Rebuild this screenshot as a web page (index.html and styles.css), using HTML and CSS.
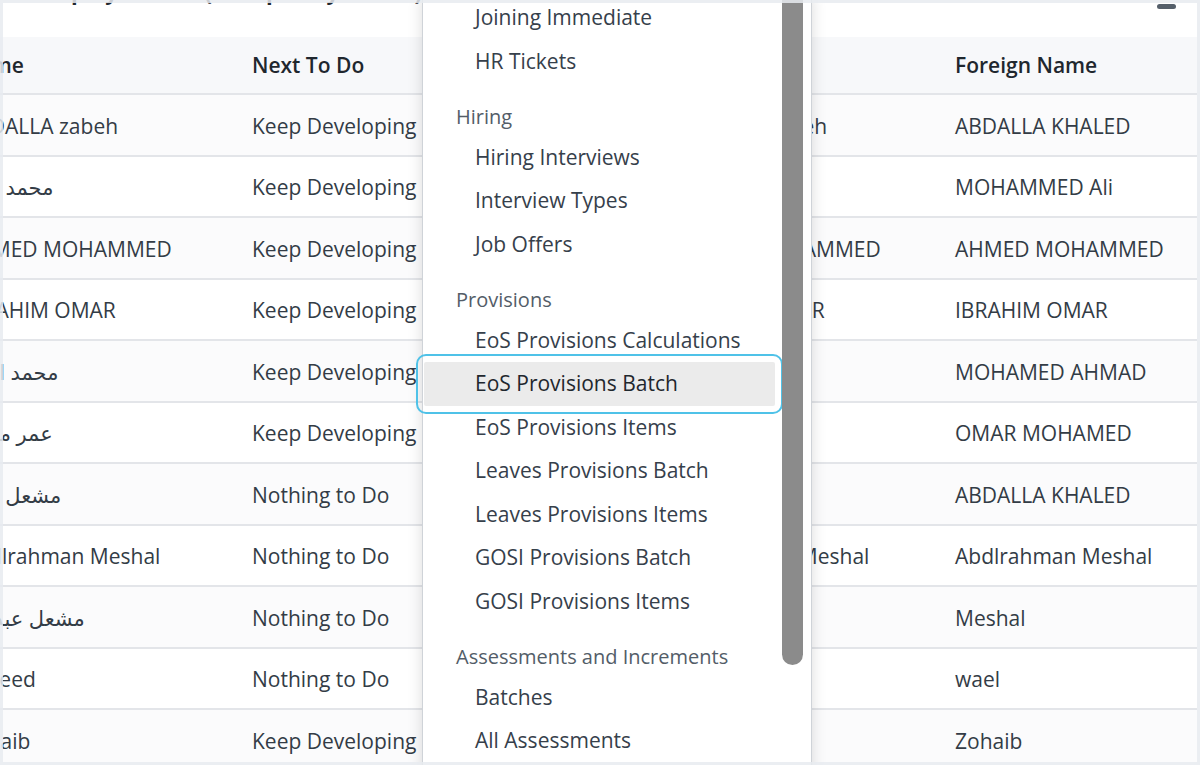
FILE: index.html
```html
<!DOCTYPE html>
<html>
<head>
	<title>Employee Files</title>
	<link rel="stylesheet" href="styles.css">
</head>
<body>
<div class="page">
  <div class="card">
    <div class="head">
      <span class="title">Active Employee Files (Grouped by Status)</span>
      <span class="collapse"></span>
    </div>
    <div class="row th">
      <div>Name</div>
      <div>Next To Do</div>
      <div>Full Name</div>
      <div>Foreign Name</div>
    </div>
    <div class="row"><div>ABDALLA zabeh</div><div>Keep Developing</div><div>ABDALLA zabeh</div><div>ABDALLA KHALED</div></div>
    <div class="row"><div>محمد علي</div><div>Keep Developing</div><div>محمد علي</div><div>MOHAMMED Ali</div></div>
    <div class="row"><div>AHMED MOHAMMED</div><div>Keep Developing</div><div>AHMED MOHAMMED</div><div>AHMED MOHAMMED</div></div>
    <div class="row"><div>IBRAHIM OMAR</div><div>Keep Developing</div><div>IBRAHIM OMAR</div><div>IBRAHIM OMAR</div></div>
    <div class="row"><div>محمد احمد</div><div>Keep Developing</div><div>محمد احمد</div><div>MOHAMED AHMAD</div></div>
    <div class="row"><div>عمر محمد</div><div>Keep Developing</div><div>عمر محمد</div><div>OMAR MOHAMED</div></div>
    <div class="row"><div>مشعل خالد</div><div>Nothing to Do</div><div>مشعل خالد</div><div>ABDALLA KHALED</div></div>
    <div class="row"><div>Abdlrahman Meshal</div><div>Nothing to Do</div><div>Abdlrahman Meshal</div><div>Abdlrahman Meshal</div></div>
    <div class="row"><div>مشعل عبدالله</div><div>Nothing to Do</div><div>مشعل عبدالله</div><div>Meshal</div></div>
    <div class="row"><div>Waleed</div><div>Nothing to Do</div><div>Waleed</div><div>wael</div></div>
    <div class="row"><div>Zohaib</div><div>Keep Developing</div><div>Zohaib</div><div>Zohaib</div></div>
  </div>

  <div class="menu">
    <div class="thumb"></div>
    <ul>
      <li>Joining Immediate</li>
      <li>HR Tickets</li>
      <li class="grp">Hiring</li>
      <li>Hiring Interviews</li>
      <li>Interview Types</li>
      <li>Job Offers</li>
      <li class="grp">Provisions</li>
      <li>EoS Provisions Calculations</li>
      <li class="on">EoS Provisions Batch</li>
      <li>EoS Provisions Items</li>
      <li>Leaves Provisions Batch</li>
      <li>Leaves Provisions Items</li>
      <li>GOSI Provisions Batch</li>
      <li>GOSI Provisions Items</li>
      <li class="grp">Assessments and Increments</li>
      <li>Batches</li>
      <li>All Assessments</li>
    </ul>
  </div>
  <div class="frame"></div>
</div>
</body>
</html>
```

FILE: styles.css
```css
body{margin:0;padding:0;background:#fff;}
.page{
  position: relative;
  width: 1200px;
  height: 765px;
  overflow: hidden;
  font-family: "Open Sans", "DejaVu Sans", sans-serif;
  font-size: 21px;
  color: #333c46;
}
.card{
  margin: -29px 3px 0 -49px;
  background: #fff;
}
.head{
  display: flex;
  justify-content: space-between;
  align-items: flex-start;
  height: 40px;
  margin-bottom: 26px;
  padding: 0 21px 0 12px;
}
.title{
  line-height: 40px;
  font-size: 22px;
  font-weight: 700;
  color: #1f272e;
  white-space: nowrap;
}
.collapse{
  margin-top: 33px;
  width: 19px;
  height: 5px;
  border-radius: 3px;
  background: #555f6a;
}
.row{
  display: grid;
  grid-template-columns: 289px 420px 283px 1fr;
  align-items: center;
  height: 59.5px;
  border-bottom: 2px solid #e3e5e9;
}
.row > div{
  padding: 2px 0 0 12px;
  white-space: nowrap;
  overflow: hidden;
}
.row:nth-child(odd){
  background: #fbfbfc;
}
.row.th{
  height: 56px;
  background: #f7f8fa;
  font-weight: 600;
  color: #1f272e;
}
.row.th > div{
  padding-top: 0;
}

/* dropdown over the table */
.menu{
  position: absolute;
  left: 422px;
  top: -4px;
  width: 388px;
  height: 780px;
  background: #fff;
  border-left: 1px solid #cfd3d8;
  border-right: 1px solid #cfd3d8;
  box-shadow: 0 0 14px rgba(0,0,0,0.14);
}
.menu ul{
  list-style: none;
  margin: 0;
  padding: 0 36px 0 1px;
}
.menu li{
  height: 43.5px;
  line-height: 43.5px;
  padding-left: 51px;
  color: #36404b;
  white-space: nowrap;
}
.menu li.grp{
  height: 36.5px;
  line-height: 36.5px;
  margin-top: 16px;
  padding-left: 32px;
  font-size: 20px;
  color: #535d68;
}
.menu li.on{
  background: #ebebeb;
  border-radius: 2px;
  outline: 2px solid #4fc2e8;
  outline-offset: 6px;
  color: #1f272e;
}
.thumb{
  position: absolute;
  left: 359px;
  top: -20px;
  width: 21px;
  height: 689px;
  border-radius: 11px;
  background: #8b8b8b;
}
.frame{
  position: absolute;
  top: 0;
  left: 0;
  right: 0;
  bottom: 0;
  border: 3px solid rgba(232,235,240,0.85);
  pointer-events: none;
}
```
